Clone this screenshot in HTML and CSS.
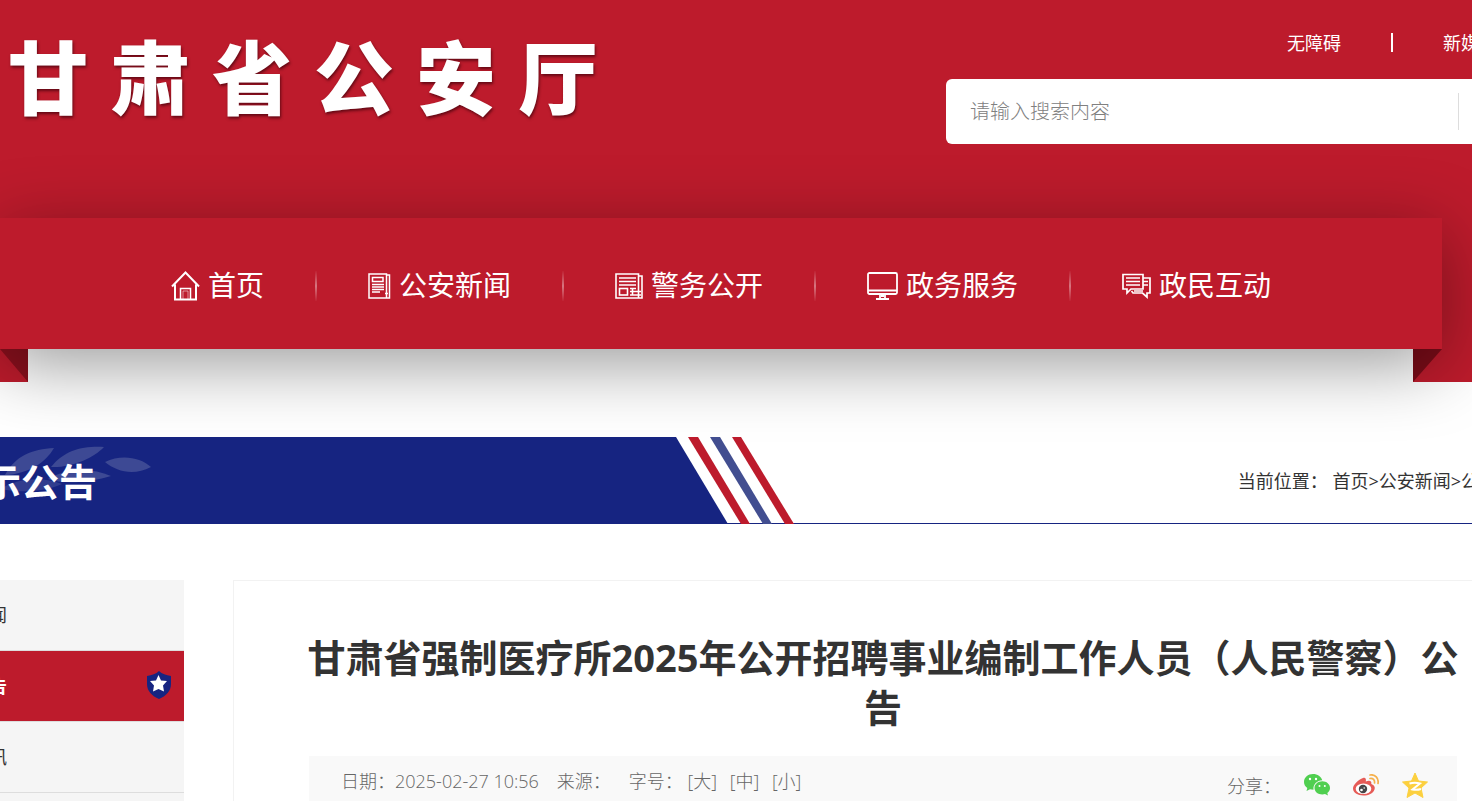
FILE: index.html
```html
<!DOCTYPE html>
<html lang="zh-CN">
<head>
  <meta charset="UTF-8">
  <meta name="viewport" content="width=device-width, initial-scale=1.0">
  <title>甘肃省公安厅</title>
  <link rel="stylesheet" href="styles.css">
</head>
<body>

  <header class="header">
    <div class="header-top wide">
      <div class="logo" aria-label="甘肃省公安厅">
        <span>甘</span><span>肃</span><span>省</span><span>公</span><span>安</span><span>厅</span>
      </div>
      <div class="header-right">
        <div class="top-links">
          <a href="#">无障碍</a>
          <i class="top-line"></i>
          <a href="#">新媒体矩阵</a>
        </div>
        <form class="search">
          <input type="text" aria-label="搜索" placeholder="请输入搜索内容">
          <button type="button" aria-label="搜索"></button>
        </form>
      </div>
    </div>

    <!-- Ribbon navigation -->
    <nav class="nav">
      <a href="#">
        <svg width="29" height="30" viewBox="0 0 29 30" fill="none" stroke="currentColor" stroke-width="2">
          <path d="M1 15.500L14.500 1.500L28 15.500M4 13.500V28.500H25V13.500"/>
          <path d="M9.500 28V17.500H19.500V28" stroke-width="1.500"/>
          <path d="M12 28V20H17V28" stroke-width="1" opacity=".5"/>
        </svg>
        <span>首页</span>
      </a>
      <a href="#">
        <svg width="23" height="26" viewBox="0 0 23 26" fill="none" stroke="currentColor" stroke-width="1.500">
          <path d="M1 1H18.500V25H1ZM18.500 2H21.500V25H18.500"/>
          <rect x="4.500" y="4.500" width="10.500" height="4"/>
          <path d="M4 11.500H16M4 14H16M4 16.500H16M4 19H12M17 20.500H20"/>
        </svg>
        <span>公安新闻</span>
      </a>
      <a href="#">
        <svg width="28" height="26" viewBox="0 0 28 26" fill="none" stroke="currentColor" stroke-width="1.600">
          <path d="M1 1H23.500V25H1ZM23.500 3H27V25H23.500"/>
          <path d="M4 5H21M4 8.500H21M4 12H21M15 15.500H21M15 18.500H26M15 22H26M17.500 15V22"/>
          <rect x="4.500" y="15.500" width="8" height="6.500"/>
        </svg>
        <span>警务公开</span>
      </a>
      <a href="#">
        <svg width="31" height="28" viewBox="0 0 31 28" fill="none" stroke="currentColor" stroke-width="1.800">
          <rect x="1" y="1" width="29" height="21" rx="1.500"/>
          <path d="M1 18.500H30M13 22V26M18 22V26M9 27H22M14 24H17"/>
        </svg>
        <span>政务服务</span>
      </a>
      <a href="#">
        <svg width="29" height="26" viewBox="0 0 29 26" fill="none" stroke="currentColor" stroke-width="1.700">
          <path d="M1 1.500H21V16H9L5 20V16H1Z"/>
          <path d="M4 5H18M4 8.500H18M4 12H18M21 5H28V20H25V24L20.500 20H11L9.500 18M21 8.500H26M21 12H26M12 18H21"/>
        </svg>
        <span>政民互动</span>
      </a>
    </nav>

    <div class="folds">
      <svg width="28" height="33" viewBox="0 0 28 33"><path d="M0 0H28V33Z" fill="#8a101d"/></svg>
      <div class="folds-gap"></div>
      <svg width="59" height="33" viewBox="0 0 59 33"><path d="M0 0H29L0 33Z" fill="#7a0c18"/></svg>
    </div>
  </header>

  <div class="banner">
    <div class="banner-inner wide">
      <div class="banner-title">
        <svg class="laurel" width="160" height="87" viewBox="0 0 160 87" fill="#3d4994">
          <path d="M5 38C15 19 32 12 54 11C46 25 29 37 5 38Z"/>
          <path d="M51 30C65 13 82 9 104 10C94 21 71 31 51 30Z"/>
          <path d="M105 25C121 17 140 20 151 30C134 39 117 35 105 25Z"/>
          <path d="M48 42C68 30 92 31 111 39C92 45 65 48 48 42Z"/>
          <path d="M0 52C20 40 44 40 62 47C44 55 22 56 0 52Z" opacity=".7"/>
        </svg>
        <h2>公示公告</h2>
      </div>
      <svg class="stripes" width="118" height="87" viewBox="0 0 118 87">
        <path d="M0 0L52 87H0Z" fill="#162481"/>
        <path d="M12 0H22L74 87H65Z" fill="#bd1b2c"/>
        <path d="M34 0H44L96 87H87Z" fill="#424e90"/>
        <path d="M56 0H65L118 87H109Z" fill="#bd1b2c"/>
      </svg>
      <div class="crumbs">当前位置： <a href="#">首页</a>&gt;<a href="#">公安新闻</a>&gt;<a href="#">公示公告</a></div>
    </div>
  </div>

  <div class="main wide">
    <aside class="side">
      <a href="#">公安新闻</a>
      <a href="#" class="active">公示公告
        <svg width="26" height="28" viewBox="0 0 26 28">
          <path d="M13 0C16 3 20 4 25 5V13C25 20 20 25 13 28C6 25 1 20 1 13V5C6 4 10 3 13 0Z" fill="#162481"/>
          <path d="M12.500 4L15 9.500L21 10L17 14.500L18 20.500L12.500 18L7 20.500L8 14.500L4 10L10 9.500Z" fill="#fff"/>
        </svg>
      </a>
      <a href="#">警务资讯</a>
      <a href="#">政策解读</a>
    </aside>

    <article class="article">
      <h1>甘肃省强制医疗所2025年公开招聘事业编制工作人员（人民警察）公告</h1>
      <div class="meta">
        <div class="meta-left">
          <span>日期：2025-02-27 10:56</span>
          <span>来源：</span>
          <div class="sizes">
            <span>字号：</span>
            <a href="#">[大]</a>
            <a href="#">[中]</a>
            <a href="#">[小]</a>
          </div>
        </div>
        <div class="share">
          <span>分享：</span>
          <a href="#" aria-label="微信">
            <svg width="26" height="22" viewBox="0 0 26 22">
              <path d="M9 0C4 0 0 3.500 0 8C0 10.500 1.300 12.600 3.300 14L2.500 17L6 15.300C7 15.600 8 15.700 9.500 15.700C8.800 10.500 13 6.500 18.300 6.300C17.300 2.500 13.500 0 9 0Z" fill="#50cf50"/>
              <path d="M18.300 7.300C14 7.300 10.500 10.200 10.500 14C10.500 17.700 14 20.500 18.300 20.500C19.300 20.500 20.200 20.300 21 20L24 21.500L23.300 19C25 17.800 26 16 26 14C26 10.200 22.600 7.300 18.300 7.300Z" fill="#50cf50"/>
              <g fill="#fff"><circle cx="6" cy="5" r="1.200"/><circle cx="12" cy="5" r="1.200"/><circle cx="15.500" cy="12" r="1"/><circle cx="20.800" cy="12" r="1"/></g>
            </svg>
          </a>
          <a href="#" aria-label="微博">
            <svg width="26" height="22" viewBox="0 0 26 22">
              <path d="M10 4C12 3 13.500 4.500 12.800 7.500C16 6 19 6.500 18.300 10C21 11 22.500 13 21.500 15.500C20 19.500 15.500 21.500 10.500 21.500C4.500 21.500 0 18.500 0 14.500C0 11 5.500 5.500 10 4Z" fill="#e65b57"/>
              <ellipse cx="10.500" cy="14.700" rx="7.800" ry="5.300" fill="#fff"/>
              <circle cx="10" cy="15" r="4.200" fill="#464648"/>
              <circle cx="8.500" cy="16" r="1.300" fill="#fff"/><circle cx="11.200" cy="14" r=".8" fill="#fff"/>
              <path d="M17 1C22 0 26 4 25 9.500M17 4.500C20 4 22 6 21.500 9" fill="none" stroke="#f5b04c" stroke-width="1.700" stroke-linecap="round"/>
            </svg>
          </a>
          <a href="#" aria-label="QQ空间">
            <svg width="26" height="25" viewBox="0 0 26 25">
              <path d="M13 0L16.500 8L25.500 9L19 15L21 24.500L13 20L5 24.500L7 15L.5 9L9.500 8Z" fill="#fcd03f" stroke="#fcd03f" stroke-linejoin="round"/>
              <path d="M7.500 10.500C11 9.500 14.500 9.500 18 10.500L10.500 16.500C13 17 16 17 19 16" fill="none" stroke="#fff" stroke-width="2"/>
            </svg>
          </a>
        </div>
      </div>
    </article>
  </div>

</body>
</html>
```
FILE: styles.css
```css
* {
  box-sizing: border-box;
}

body {
  margin: 0;
  height: 100vh;
  overflow: hidden;
  background: #fff;
  color: #333;
  font-family: "Open Sans", "Noto Sans CJK SC", sans-serif;
  font-size: 18px;
}

a {
  color: inherit;
  text-decoration: none;
}

h1, h2 {
  margin: 0;
}

svg {
  display: block;
  flex: none;
}

/* the site is wider than the window on both sides */
.wide {
  margin: 0 -61px 0 -80px;
}

/* Header */
.header {
  background: #bd1b2c;
}

.header-top {
  display: flex;
  justify-content: space-between;
  height: 218px;
  padding-left: 88px;
}

.logo {
  display: flex;
  gap: 22px;
  padding-top: 33px;
  color: #fff;
  font-family: "Noto Sans CJK SC", sans-serif;
  font-size: 80px;
  font-weight: 900;
  line-height: 80px;
  text-shadow: 1px 2px 3px rgba(60, 0, 10, 0.7);
}

.header-right {
  width: 587px;
  padding-top: 30px;
}

.top-links {
  display: flex;
  justify-content: flex-end;
  align-items: center;
  gap: 50px;
  height: 24px;
  margin-bottom: 25px;
  color: #fff;
}

.top-line {
  width: 2px;
  height: 19px;
  background: #fff;
}

.search {
  display: flex;
  align-items: center;
  height: 65px;
  border-radius: 6px;
  background: #fff;
}

.search input {
  flex: 1;
  min-width: 0;
  height: 65px;
  padding: 0 24px;
  border: 0;
  background: none;
  font-family: inherit;
  font-size: 20px;
}

.search input::placeholder {
  color: #808080;
  font-weight: 300;
}

.search button {
  width: 75px;
  height: 37px;
  border: 0;
  border-left: 1px solid #ddd;
  background: none;
}

/* Ribbon */
.nav {
  position: relative;
  z-index: 1;
  display: flex;
  justify-content: center;
  align-items: center;
  height: 131px;
  margin-right: 30px;
  padding-top: 5px;
  background: #bd1b2c;
  color: #fff;
  font-size: 28px;
  box-shadow: 0 15px 70px rgba(0, 0, 0, 0.4);
}

.nav a {
  display: flex;
  align-items: center;
  gap: 8px;
  height: 30px;
  padding: 0 51px;
}

.nav span {
  padding-bottom: 4px;
}

.nav a + a {
  border-left: 2px solid;
  border-image: linear-gradient(transparent, rgba(255, 255, 255, 0.4), transparent) 1;
}

.folds {
  display: flex;
}

.folds-gap {
  flex: 1;
  background: #fff;
}

/* Section banner */
.banner {
  position: relative;
  z-index: 2;
  margin-top: 55px;
  border-bottom: 1px solid #162481;
}

.banner-inner {
  display: flex;
  height: 86px;
}

.banner-title {
  position: relative;
  display: flex;
  align-items: center;
  width: 756px;
  padding: 2px 0 0 25px;
  background: #162481;
  color: #fff;
}

.banner-title h2 {
  position: relative;
  font-size: 38px;
  line-height: 50px;
}

.laurel {
  position: absolute;
  top: 0;
  left: 80px;
}

.crumbs {
  align-self: center;
  margin-left: auto;
}

/* Main */
.main {
  display: flex;
  align-items: flex-start;
  gap: 49px;
  padding-top: 56px;
}

.side {
  flex: none;
  width: 264px;
  background: #f5f5f5;
}

.side a {
  display: flex;
  justify-content: space-between;
  align-items: center;
  height: 71px;
  padding: 0 12px 2px 15px;
  border-bottom: 1px solid #ddd;
}

.side .active {
  background: #bd1b2c;
  color: #fff;
  font-weight: bold;
}

.article {
  flex: 1;
  padding: 51px 71px 0;
  border: 1px solid #f2f2f2;
}

.article h1 {
  margin-bottom: 24px;
  font-size: 38px;
  line-height: 50px;
  text-align: center;
}

.meta {
  display: flex;
  justify-content: space-between;
  align-items: center;
  height: 58px;
  margin: 0 4px;
  padding: 0 29px 0 32px;
  background: #f9f9f9;
  color: #666;
  font-weight: 300;
}

.meta-left {
  display: flex;
  align-self: flex-start;
  gap: 18px;
  line-height: 50px;
}

.sizes a {
  margin-right: 8px;
}

.share {
  display: flex;
  align-items: center;
  gap: 23px;
}
```
